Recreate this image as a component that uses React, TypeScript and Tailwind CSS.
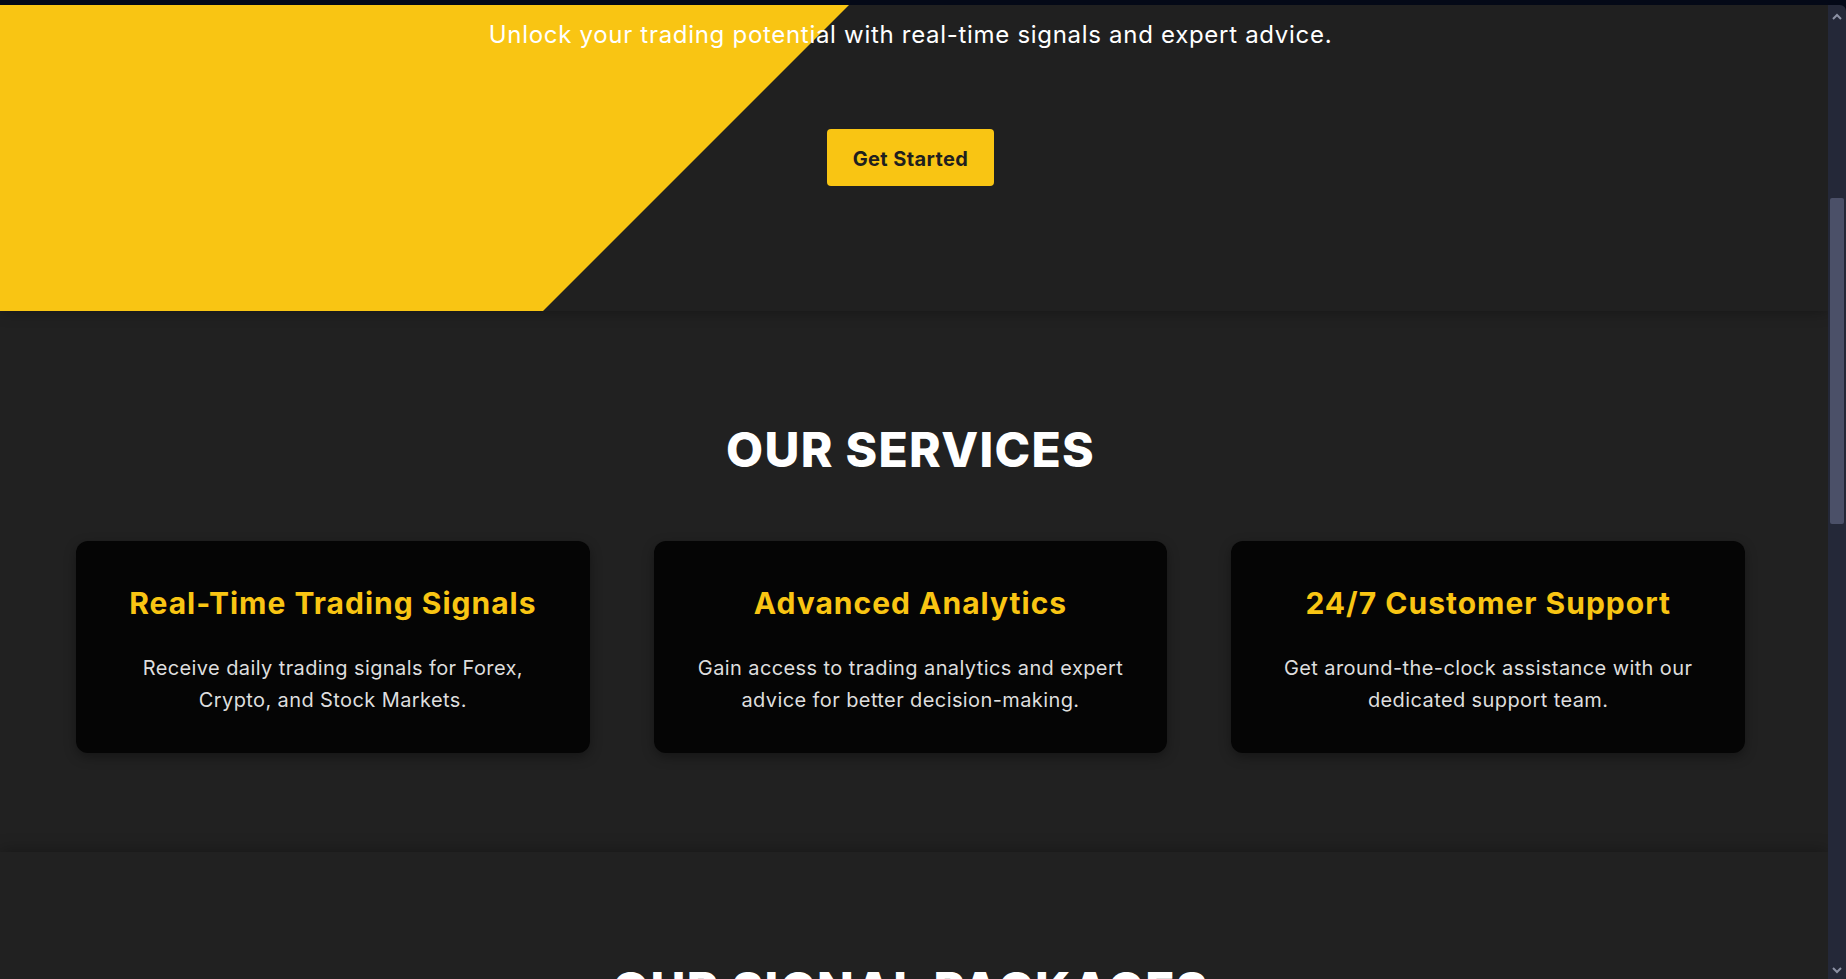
import React from 'react';

const services = [
  {
    title: 'Real-Time Trading Signals',
    lines: ['Receive daily trading signals for Forex,', 'Crypto, and Stock Markets.'],
  },
  {
    title: 'Advanced Analytics',
    lines: ['Gain access to trading analytics and expert', 'advice for better decision-making.'],
  },
  {
    title: '24/7 Customer Support',
    lines: ['Get around-the-clock assistance with our', 'dedicated support team.'],
  },
];

function ScrollBar() {
  return (
    <div className="w-[18px] shrink-0 bg-[#242838] flex flex-col items-center rounded-tr-[6px]">
      <svg width="10" height="8" viewBox="0 0 10 8" className="mt-[8px]">
        <path d="M1 6 L5 2 L9 6" stroke="#8b90a3" strokeWidth="2" fill="none" />
      </svg>
      <div className="mt-[177px] w-[14px] h-[326px] bg-[#4b5068] rounded-[2px]" />
      <div className="flex-1" />
      <svg width="10" height="8" viewBox="0 0 10 8" className="mb-[5px]">
        <path d="M1 2 L5 6 L9 2" stroke="#8b90a3" strokeWidth="2" fill="none" />
      </svg>
    </div>
  );
}

export default function App() {
  return (
    <div className="h-screen overflow-hidden flex flex-col bg-[#040917] font-['Inter',sans-serif]">
      <div className="h-[5px] shrink-0" />
      <div className="flex flex-1 min-h-0">
        <main className="flex-1 min-w-0 overflow-hidden bg-[#212121]">
          {/* hero */}
          <section className="relative z-10 h-[306px] pr-[7px] bg-[#202020] shadow-[0_0_14px_rgba(0,0,0,0.35)] flex flex-col items-center">
            <div className="absolute inset-0 bg-[#f9c513] [clip-path:polygon(0_0,849px_0,543px_100%,0_100%)]" />
            <p className="relative mt-[12px] text-[24px] leading-9 tracking-[0.7px] text-white">
              Unlock your trading potential with real-time signals and expert advice.
            </p>
            <button className="relative mt-[76px] h-[57px] w-[167px] pt-[2px] rounded-[4px] bg-[#f9c513] text-[20px] font-bold tracking-[0.4px] text-[#1f1f1f]">
              Get Started
            </button>
          </section>

          {/* services */}
          <section className="relative h-[541px] bg-[#212121] pt-[115px]">
            <h2 className="pr-[7px] text-center text-[48px] leading-none font-extrabold tracking-[1.3px] text-white">
              OUR SERVICES
            </h2>
            <div className="mt-[67px] grid grid-cols-3 gap-16 pl-[76px] pr-[83px]">
              {services.map((s) => (
                <div
                  key={s.title}
                  className="h-[212px] rounded-xl bg-[#050505] pt-[44px] text-center shadow-[0_4px_12px_rgba(0,0,0,0.35)]"
                >
                  <h3 className="text-[30px] leading-9 font-bold tracking-[1px] text-[#f9c513]">{s.title}</h3>
                  <p className="mt-[31px] text-[20px] leading-8 tracking-[0.4px] text-[#dedede]">
                    {s.lines[0]}
                    <br />
                    {s.lines[1]}
                  </p>
                </div>
              ))}
            </div>
          </section>

          {/* packages */}
          <section className="relative z-10 h-[300px] bg-[#212121] pt-[114px] pr-[7px] shadow-[0_0_16px_rgba(0,0,0,0.35)]">
            <h2 className="text-center text-[48px] leading-none font-extrabold tracking-[1.3px] text-white">
              OUR SIGNAL PACKAGES
            </h2>
          </section>
        </main>
        <ScrollBar />
      </div>
    </div>
  );
}
